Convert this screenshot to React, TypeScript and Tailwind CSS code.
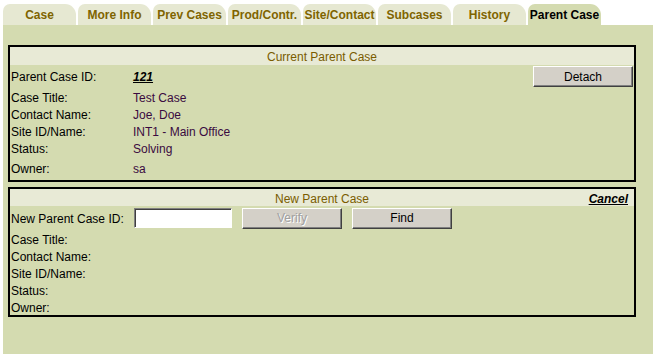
import React from 'react';

const tabs = ['Case', 'More Info', 'Prev Cases', 'Prod/Contr.', 'Site/Contact', 'Subcases', 'History', 'Parent Case'];

const Btn = ({ label, disabled = false, className = '' }: { label: string; disabled?: boolean; className?: string }) => (
  <button
    className={`h-[21px] w-[100px] bg-[#d4d0c8] border border-t-white border-l-white border-r-[#404040] border-b-[#404040] shadow-[inset_-1px_-1px_0_#808080] text-[12px] leading-none ${
      disabled ? 'text-[#a0a0a0] [text-shadow:1px_1px_0_#fff]' : 'text-black'
    } ${className}`}
  >
    {label}
  </button>
);

const Row = ({ label, value, h = 'h-[17px]' }: { label: string; value?: string; h?: string }) => (
  <div className={`flex items-center pt-[2px] ${h}`}>
    <div className="w-[123px] shrink-0 pl-[1px] text-black">{label}</div>
    {value && <div className="text-[#3a0a40]">{value}</div>}
  </div>
);

export default function App() {
  return (
    <div className="w-[657px] h-[359px] bg-white overflow-hidden font-['Liberation_Sans',Arial,sans-serif] text-[12px]">
      {/* Tabs */}
      <div className="flex gap-[2px] pl-[3px] pt-[4px]">
        {tabs.map((t) => {
          const active = t === 'Parent Case';
          return (
            <div
              key={t}
              className={`w-[73px] h-[21px] flex items-center justify-center pt-[1px] rounded-tl-[7px] rounded-tr-[11px] font-bold whitespace-nowrap ${
                active ? 'bg-[#d4dbb0] text-black' : 'bg-[#e6e8d2] text-[#7f6400]'
              }`}
            >
              {t}
            </div>
          );
        })}
      </div>

      {/* Panel */}
      <div className="ml-[3px] w-[650px] h-[329px] bg-[#d4dbb0] pt-[20px] pl-[5px] flex flex-col gap-[5px]">
        {/* Current parent case */}
        <div className="w-[628px] border-2 border-black">
          <div className="h-[18px] pt-[2px] bg-[#e8ead6] flex items-center justify-center text-[#7a5c00]">
            Current Parent Case
          </div>
          <div className="flex items-center h-[23px]">
            <div className="w-[123px] shrink-0 pl-[1px] pt-[1px] text-black">Parent Case ID:</div>
            <a className="font-bold italic underline text-black pt-[1px]">121</a>
            <Btn label="Detach" className="ml-auto mr-[1px]" />
          </div>
          <Row label="Case Title:" value="Test Case" />
          <Row label="Contact Name:" value="Joe, Doe" />
          <Row label="Site ID/Name:" value="INT1 - Main Office" />
          <Row label="Status:" value="Solving" />
          <Row label="Owner:" value="sa" h="h-[24px]" />
        </div>

        {/* New parent case */}
        <div className="w-[628px] border-2 border-black">
          <div className="relative h-[17px] pt-[2px] bg-[#e8ead6] flex items-center justify-center text-[#7a5c00]">
            New Parent Case
            <a className="absolute right-[6px] top-0 h-[17px] pt-[2px] flex items-center font-bold italic underline text-black">
              Cancel
            </a>
          </div>
          <div className="flex items-center h-[24px]">
            <div className="w-[124px] shrink-0 pl-[1px] pt-[1px] text-black">New Parent Case ID:</div>
            <input className="w-[98px] h-[20px] bg-white border border-t-[#808080] border-l-[#808080] border-r-white border-b-white shadow-[inset_1px_1px_0_#404040] outline-none" />
            <Btn label="Verify" disabled className="ml-[10px] w-[99px]" />
            <Btn label="Find" className="ml-[10px] w-[99px]" />
          </div>
          <Row label="Case Title:" />
          <Row label="Contact Name:" />
          <Row label="Site ID/Name:" />
          <Row label="Status:" />
          <Row label="Owner:" />
        </div>
      </div>
    </div>
  );
}
